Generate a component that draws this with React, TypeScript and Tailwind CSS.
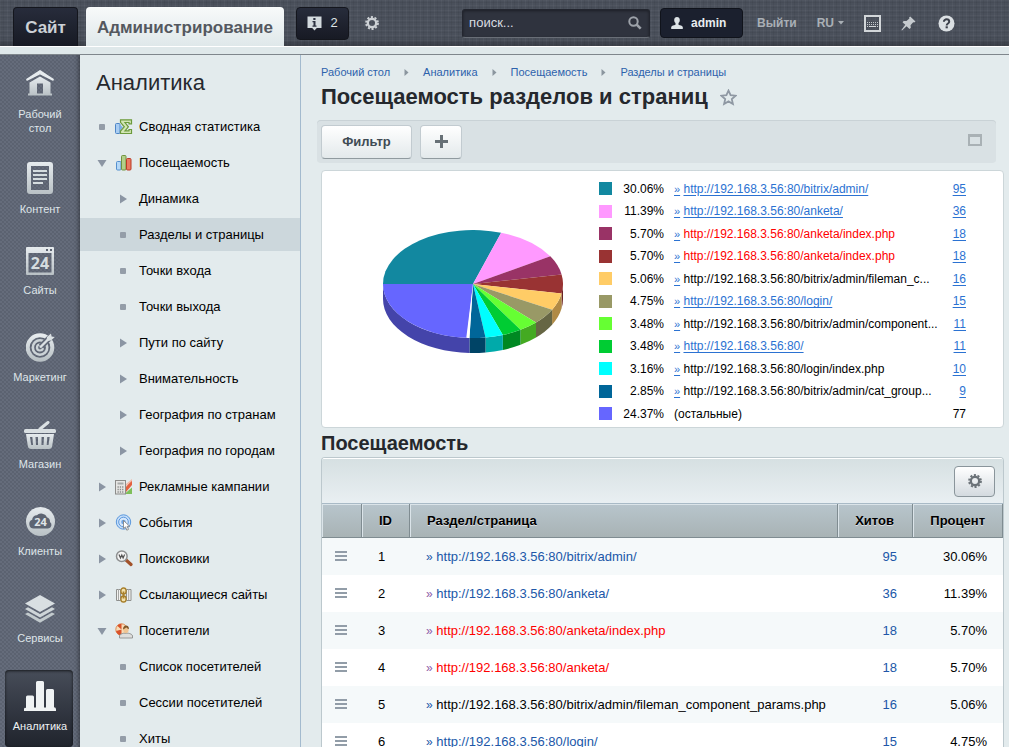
import React from "react";

type Kind = "dot" | "closed" | "open";

/* ---------- top bar icons ---------- */

const GearIcon = ({ color, size }: { color: string; size: number }) => (
  <svg width={size} height={size} viewBox="0 0 14 14" aria-hidden="true">
    <circle cx="7" cy="7" r="4.2" fill="none" stroke={color} strokeWidth="2.4" />
    <circle cx="7" cy="7" r="6" fill="none" stroke={color} strokeWidth="1.8" strokeDasharray="2.1 1.67" />
  </svg>
);

const InfoIcon = () => (
  <svg width="15" height="15" viewBox="0 0 15 15" aria-hidden="true">
    <path d="M0.5 0.5h14v11.500h-4.700L7.500 14.500 5.200 12H0.500z" fill="#d3dade" />
    <path d="M6.300 2h2.200v2H6.300zM5.500 5h3v4.500h1V10.700h-4V9.500h1V6.200h-1z" fill="#2c3140" />
  </svg>
);

const SearchIcon = () => (
  <svg width="14" height="14" viewBox="0 0 14 14" aria-hidden="true">
    <circle cx="5.500" cy="5.500" r="4.200" fill="none" stroke="#9da2a9" strokeWidth="2" />
    <path d="M8.700 8.700L12.700 12.700" stroke="#9da2a9" strokeWidth="2.600" />
  </svg>
);

const UserIcon = () => (
  <svg width="12" height="12" viewBox="0 0 12 12" aria-hidden="true">
    <path d="M6 0c1.700 0 2.800 1.200 2.800 2.900 0 1.500-.6 2.500-1.300 3.200v1.700c1.700.5 4 1 4.300 2.200V12H.2v-2c.3-1.200 2.600-1.700 4.300-2.200V6.100C3.800 5.400 3.200 4.400 3.200 2.900 3.200 1.200 4.300 0 6 0z" fill="#dde3e6" />
  </svg>
);

const KeyboardIcon = () => (
  <svg width="17" height="17" viewBox="0 0 17 17" aria-hidden="true">
    <rect x="1" y="1" width="15" height="15" fill="none" stroke="#d2d6d9" strokeWidth="2" />
    <path d="M3 7.500h11M3 9.500h11" stroke="#c3c8cc" strokeDasharray="1 1" />
    <path d="M3 11.500h1M5 11.500h7M13 11.500h1" stroke="#d2d6d9" />
  </svg>
);

const PinIcon = () => (
  <svg width="15" height="15" viewBox="0 0 15 15" aria-hidden="true">
    <path d="M9.200 0.500l5.300 5-1.300 1-1-.3-2.700 3 .3 2.600-1.300 1.200-2.900-2.800L1 14.600l-.6-.5 3.900-5.300L1.500 6.200l1.200-1.300 2.800.2 2.900-2.700-.3-.9z" fill="#c5cace" />
  </svg>
);

const HelpIcon = () => (
  <svg width="17" height="17" viewBox="0 0 17 17" aria-hidden="true">
    <circle cx="8.500" cy="8.500" r="8" fill="#dbe0e3" />
    <path d="M5.900 6.700c0-3.200 5.300-3.100 5.300 0 0 1.800-2.500 1.700-2.500 3.700" fill="none" stroke="#3c414b" strokeWidth="2" />
    <rect x="7.600" y="11.300" width="2.200" height="2" fill="#3c414b" />
  </svg>
);

/* ---------- rail icons ---------- */

const g = "url(#railGradient)";

const HomeIcon = () => (
  <svg width="28" height="29" viewBox="0 0 28 29" aria-hidden="true">
    <path d="M14 0.800L27 9.300V10L14 3.600 1 10V9.300z" fill="#e6ebee" stroke="#e6ebee" strokeWidth="1.600" strokeLinejoin="round" />
    <path fillRule="evenodd" d="M14 6.600L24.500 12.600V23.500H26V25.500H2V23.500H3.500V12.600zM11 13.500v10h6v-10z" fill={g} />
  </svg>
);
const ContentIcon = () => (
  <svg width="26" height="32" viewBox="0 0 26 32" aria-hidden="true">
    <path fillRule="evenodd" d="M3 0h20a3 3 0 0 1 3 3v26a3 3 0 0 1-3 3H3a3 3 0 0 1-3-3V3a3 3 0 0 1 3-3zM4 4v24h18V4z" fill={g} />
    <path d="M6 8h14v2H6zM6 12h14v2H6zM6 16h14v2H6zM6 20h10v2H6z" fill="#d5dcdf" />
  </svg>
);
const SitesIcon = () => (
  <svg width="28" height="28" viewBox="0 0 28 28" aria-hidden="true">
    <path fillRule="evenodd" d="M1 0h26a1 1 0 0 1 1 1v26a1 1 0 0 1-1 1H1a1 1 0 0 1-1-1V1a1 1 0 0 1 1-1zM2.500 6v19.500h23V6zM20 2v2h2V2zM24 2v2h2V2z" fill={g} />
    <text x="14" y="22" textAnchor="middle" fontFamily="Open Sans, sans-serif" fontWeight="700" fontSize="16" fill="#d5dcdf">24</text>
  </svg>
);
const TargetIcon = () => (
  <svg width="29" height="29" viewBox="0 0 29 29" aria-hidden="true">
    <circle cx="14" cy="14.500" r="12.300" fill="none" stroke={g} strokeWidth="4" />
    <circle cx="14" cy="14.500" r="7.200" fill="none" stroke="#ccd3d7" strokeWidth="2.600" />
    <circle cx="14" cy="14.500" r="3" fill="none" stroke="#ccd3d7" strokeWidth="2.200" />
    <path d="M15 13.500L25 3.500" stroke="#626978" strokeWidth="6" />
    <path d="M14 14.500L24 4.500" stroke="#dbe1e4" strokeWidth="2.400" />
    <path d="M20.500 8l0.500-4L25 0.500l0.600 2.900 3.200 0.600L25 7.500z" fill="#dbe1e4" />
  </svg>
);
const BasketIcon = () => (
  <svg width="32" height="28" viewBox="0 0 32 28" aria-hidden="true">
    <path d="M16 8L24 1.500" stroke="#dbe1e4" strokeWidth="3" strokeLinecap="round" />
    <rect x="0" y="8" width="32" height="4" rx="1.500" fill="#d9dfe2" />
    <path fillRule="evenodd" d="M2 13h28l-1.800 12a3.500 3.500 0 0 1-3.400 3H7.200a3.500 3.500 0 0 1-3.400-3zM6 16l1.200 8H9l-.6-8zM11.500 16l.5 8h2v-8zM17.500 16v8h2l.5-8zM23.300 16l-.6 8h1.800l1.200-8z" fill={g} />
  </svg>
);
const CloudIcon = () => (
  <svg width="29" height="29" viewBox="0 0 29 29" aria-hidden="true">
    <circle cx="14.500" cy="14.500" r="14.500" fill={g} />
    <path d="M8 21.500a4.500 4.500 0 0 1-1.800-8.700 4.500 4.500 0 0 1 4.800-4.500 6 6 0 0 1 9.800 1.900 4.800 4.800 0 0 1 3.200 4.800 3.600 3.600 0 0 1-2 6.500z" fill="#5d6472" />
    <text x="14.500" y="18.800" textAnchor="middle" fontFamily="Open Sans, sans-serif" fontWeight="700" fontSize="11" fill="#e0e5e8">24</text>
  </svg>
);
const LayersIcon = () => (
  <svg width="32" height="28" viewBox="0 0 32 28" aria-hidden="true">
    <path d="M16 0l15 8.500L16 17 1 8.500z" fill="#d9dfe2" />
    <path d="M4 12.200L16 19l12-6.800 3 1.700L16 22.500 1 13.900z" fill="#ced5d8" />
    <path d="M4 17.400l12 6.800 12-6.800 3 1.700L16 27.700 1 19.100z" fill="#c2cacd" />
  </svg>
);
const BarsIcon = () => (
  <svg width="32" height="30" viewBox="0 0 32 30" aria-hidden="true">
    <path d="M2 27V16a1.500 1.500 0 0 1 1.500-1.500h5A1.500 1.500 0 0 1 10 16v10.500h2V1.500A1.500 1.500 0 0 1 13.500 0h5A1.500 1.500 0 0 1 20 1.500v25h2V9.500A1.500 1.500 0 0 1 23.500 8h5A1.500 1.500 0 0 1 30 9.500V26.300a2 2 0 0 1 2 2V30H0v-1.700A1.500 1.500 0 0 1 2 27z" fill="#f0f3f4" />
  </svg>
);

/* ---------- menu icons ---------- */

const SumIcon = () => (
  <svg width="18" height="16" viewBox="0 0 18 16" aria-hidden="true">
    <rect x="0.500" y="4.500" width="4.500" height="10" rx="1" fill="#a9cdf2" stroke="#4f86c6" />
    <path d="M4.500 5l3.500 3.500-3.500 3.500z" fill="#7fb0e6" />
    <path d="M5.500 0.800h11v4h-2.500v-1.300h-4l3.400 4.300-3.400 4h4v-1.300h2.500v4h-11v-2.500l3.800-4.200-3.800-4.500z" fill="#d3e6b5" stroke="#6c9a3c" strokeWidth="1.200" />
  </svg>
);
const ChartIcon = () => (
  <svg width="18" height="16" viewBox="0 0 18 16" aria-hidden="true">
    <rect x="1.500" y="6.500" width="4.500" height="8.500" rx="1" fill="#b5d8f7" stroke="#5590cf" />
    <rect x="6.500" y="0.500" width="4.500" height="14.500" rx="1" fill="#b3cf8a" stroke="#70933f" />
    <rect x="11.500" y="3.500" width="4.500" height="11.500" rx="1" fill="#ea7a62" stroke="#bb3a25" />
  </svg>
);
const CampaignIcon = () => (
  <svg width="18" height="16" viewBox="0 0 18 16" aria-hidden="true">
    <path d="M10 9l7-8v5l-6 7z" fill="#e3613f" />
    <path d="M11 5l6-5v2l-6 5z" fill="#f3b9a6" />
    <path d="M10 14.500l7-6v6.500h-7z" fill="#7fbf5a" />
    <rect x="0.500" y="1.500" width="10" height="13.500" fill="#e6e6e4" stroke="#8c8c8a" />
    <rect x="2.500" y="3.500" width="6" height="2" fill="#a7aaa9" />
    <path d="M2.500 8h6M2.500 10.500h6M2.500 13h6" stroke="#8a8c8b" strokeWidth="1.300" strokeDasharray="1.300 1" />
  </svg>
);
const EventsIcon = () => (
  <svg width="18" height="17" viewBox="0 0 18 17" aria-hidden="true">
    <circle cx="8.500" cy="8" r="7.200" fill="#c4defa" stroke="#5b97dc" />
    <circle cx="8.500" cy="8" r="4.800" fill="#d6e8fb" stroke="#5b97dc" />
    <circle cx="8.500" cy="8" r="2.300" fill="#6ea5e4" />
    <path d="M8.500 6.500v8l2-1.600 1.300 3.300 1.700-.8-1.400-3.100h2.600z" fill="#fff" stroke="#7a7a7a" strokeWidth="0.800" />
  </svg>
);
const SearchersIcon = () => (
  <svg width="18" height="17" viewBox="0 0 18 17" aria-hidden="true">
    <path d="M10.500 9.500l5.500 5" stroke="#a2522a" strokeWidth="3.200" strokeLinecap="round" />
    <circle cx="6.800" cy="6.300" r="5.300" fill="#f4f4f4" stroke="#8d8f90" strokeWidth="1.500" />
    <path d="M4 4.500l1.500 3.500L6.800 5l1.300 3 1.500-3.500" fill="none" stroke="#555" strokeWidth="1.200" />
  </svg>
);
const ReferrersIcon = () => (
  <svg width="18" height="16" viewBox="0 0 18 16" aria-hidden="true">
    <path d="M1.500 2.500h4v11h-4zM11.500 2.500h4.500v11h-4.500z" fill="#f2f2f0" stroke="#8f908e" />
    <path d="M3.500 2v11M13.700 2v11" stroke="#a6a7a5" />
    <rect x="6" y="1" width="5" height="6" rx="2.300" fill="#f3e2ae" stroke="#a9802b" strokeWidth="1.300" />
    <rect x="6" y="9" width="5" height="6" rx="2.300" fill="#f3e2ae" stroke="#a9802b" strokeWidth="1.300" />
    <path d="M8.500 4.500v7" stroke="#a9802b" strokeWidth="1.800" />
  </svg>
);
const VisitorsIcon = () => (
  <svg width="18" height="16" viewBox="0 0 18 16" aria-hidden="true">
    <circle cx="6.500" cy="6.500" r="5.700" fill="#f7dcb8" stroke="#df8b52" />
    <path d="M6.500 6.500L2.200 2.800A5.700 5.700 0 0 1 6.500 0.800zM6.500 6.500v5.700A5.700 5.700 0 0 1 1 8z" fill="#d9532b" />
    <path d="M4.500 15v-2c0-1.500 2-2.300 4.300-2.800h4.400c2.300.5 4.300 1.300 4.300 2.800v2z" fill="#dededc" stroke="#8f908e" strokeWidth="0.900" />
    <ellipse cx="11" cy="6.500" rx="2.700" ry="3.600" fill="#efc493" />
    <path d="M8 6.500C7.800 1.500 14 1.300 14 6c-1.500-.2-2.300-1-2.800-1.700C10.500 5.200 9.300 5.800 8 6.500z" fill="#80572a" />
  </svg>
);

const Marker = ({ kind }: { kind: Kind }) => (
  <svg width="10" height="10" viewBox="0 0 10 10" aria-hidden="true">
    {kind === "dot" && <rect x="2" y="2" width="6" height="6" rx="1" fill="#949da8" />}
    {kind === "closed" && <path d="M2 0.500L9 5 2 9.500z" fill="#8b95a3" />}
    {kind === "open" && <path d="M0.500 2h9L5 9z" fill="#8b95a3" />}
  </svg>
);

/* ---------- data ---------- */

const rail = [
  { label: "Рабочий стол", Icon: HomeIcon, box: "h-[94px]" },
  { label: "Контент", Icon: ContentIcon, box: "h-[81px]" },
  { label: "Сайты", Icon: SitesIcon, box: "h-[81px]" },
  { label: "Маркетинг", Icon: TargetIcon, box: "h-[87px]" },
  { label: "Магазин", Icon: BasketIcon, box: "h-[87px]" },
  { label: "Клиенты", Icon: CloudIcon, box: "h-[87px]" },
  { label: "Сервисы", Icon: LayersIcon, box: "h-[87px]" },
  { label: "Аналитика", Icon: BarsIcon, box: "h-[88px]", active: true },
];

const menu: { label: string; kind: Kind; Icon?: () => React.JSX.Element; active?: boolean }[] = [
  { label: "Сводная статистика", kind: "dot", Icon: SumIcon },
  { label: "Посещаемость", kind: "open", Icon: ChartIcon },
  { label: "Динамика", kind: "closed" },
  { label: "Разделы и страницы", kind: "dot", active: true },
  { label: "Точки входа", kind: "dot" },
  { label: "Точки выхода", kind: "dot" },
  { label: "Пути по сайту", kind: "closed" },
  { label: "Внимательность", kind: "closed" },
  { label: "География по странам", kind: "closed" },
  { label: "География по городам", kind: "closed" },
  { label: "Рекламные кампании", kind: "closed", Icon: CampaignIcon },
  { label: "События", kind: "closed", Icon: EventsIcon },
  { label: "Поисковики", kind: "closed", Icon: SearchersIcon },
  { label: "Ссылающиеся сайты", kind: "closed", Icon: ReferrersIcon },
  { label: "Посетители", kind: "open", Icon: VisitorsIcon },
  { label: "Список посетителей", kind: "dot" },
  { label: "Сессии посетителей", kind: "dot" },
  { label: "Хиты", kind: "dot" },
];

const host = "http://192.168.3.56:80/";
const linkCls = "text-[#2b72d2] underline underline-offset-2";
const legend = [
  { color: "#1288a0", side: "#0c5f70", value: 30.06, url: host + "bitrix/admin/", tone: linkCls, hits: 95 },
  { color: "#ff99ff", side: "#b36bb3", value: 11.39, url: host + "anketa/", tone: linkCls, hits: 36 },
  { color: "#993366", side: "#6b2447", value: 5.7, url: host + "anketa/index.php", tone: "text-[#ff0000]", hits: 18 },
  { color: "#993333", side: "#6b2424", value: 5.7, url: host + "anketa/index.php", tone: "text-[#ff0000]", hits: 18 },
  { color: "#ffcc66", side: "#b08a45", value: 5.06, url: host + "bitrix/admin/fileman_c...", tone: "text-black", hits: 16 },
  { color: "#999966", side: "#666644", value: 4.75, url: host + "login/", tone: linkCls, hits: 15 },
  { color: "#66ff33", side: "#44aa22", value: 3.48, url: host + "bitrix/admin/component...", tone: "text-black", hits: 11 },
  { color: "#00cc33", side: "#008822", value: 3.48, url: host, tone: linkCls, hits: 11 },
  { color: "#00ffff", side: "#00aaaa", value: 3.16, url: host + "login/index.php", tone: "text-black", hits: 10 },
  { color: "#006699", side: "#004466", value: 2.85, url: host + "bitrix/admin/cat_group...", tone: "text-black", hits: 9 },
  { color: "#6666ff", side: "#4444aa", value: 24.37, url: "", tone: "text-black", hits: 77 },
];

const rows = [
  { url: host + "bitrix/admin/", tone: "text-[#2057a8]", mark: "text-[#2057a8]", hits: 95, pct: "30.06%" },
  { url: host + "anketa/", tone: "text-[#2057a8]", mark: "text-[#8c5ba8]", hits: 36, pct: "11.39%" },
  { url: host + "anketa/index.php", tone: "text-[#ff0000]", mark: "text-[#8c5ba8]", hits: 18, pct: "5.70%" },
  { url: host + "anketa/", tone: "text-[#ff0000]", mark: "text-[#8c5ba8]", hits: 18, pct: "5.70%" },
  { url: host + "bitrix/admin/fileman_component_params.php", tone: "text-black", mark: "text-[#2057a8]", hits: 16, pct: "5.06%" },
  { url: host + "login/", tone: "text-[#2057a8]", mark: "text-[#2057a8]", hits: 15, pct: "4.75%" },
];

/* ---------- chart ---------- */

function Pie() {
  const cx = 90, cy = 54, rx = 90, ry = 54, depth = 15;
  const at = (a: number) => {
    const r = (a * Math.PI) / 180;
    return [cx - rx * Math.cos(r), cy - ry * Math.sin(r)];
  };
  let angle = 0;
  const slices = legend.map((s, i) => {
    const start = angle;
    angle += s.value * 3.6;
    const end = Math.min(angle, 360);
    const last = i === legend.length - 1;
    const [x1, y1] = at(last ? start + 2 : start);
    const [x2, y2] = at(end);
    const top = `M${cx} ${cy}L${x1} ${y1}A${rx} ${ry} 0 0 1 ${x2} ${y2}Z`;
    let wall = "";
    if (end > 180) {
      const [sx, sy] = at(Math.max(start, 180));
      wall = `M${sx} ${sy}A${rx} ${ry} 0 0 1 ${x2} ${y2}V${y2 + depth}A${rx} ${ry} 0 0 0 ${sx} ${sy + depth}Z`;
    }
    return { ...s, top, wall };
  });
  return (
    <svg width="180" height="124" viewBox="0 0 180 124" role="img" aria-label="Посещаемость">
      {slices.map((s, i) => s.wall && <path key={i} d={s.wall} fill={s.side} />)}
      {slices.map((s, i) => (
        <path key={i} d={s.top} fill={s.color} />
      ))}
      <path d="M90 54L84 107.800L86.400 108z" fill="#fff" />
    </svg>
  );
}

/* ---------- layout ---------- */

function TopBar() {
  return (
    <header className="flex-none">
      <div className="flex h-[46px] items-end bg-[#4a505b] bg-[repeating-linear-gradient(90deg,rgba(255,255,255,0.035)_0px,rgba(255,255,255,0.035)_1px,transparent_1px,transparent_3px,rgba(0,0,0,0.05)_3px,rgba(0,0,0,0.05)_4px,transparent_4px,transparent_7px),repeating-linear-gradient(0deg,rgba(255,255,255,0.03)_0px,rgba(255,255,255,0.03)_1px,transparent_1px,transparent_3px,rgba(0,0,0,0.05)_3px,rgba(0,0,0,0.05)_4px,transparent_4px,transparent_5px)] pl-[13px] shadow-[inset_0_-6px_6px_-4px_rgba(0,0,0,0.35)]">
        <a href="#site" className="flex h-[39px] w-[65px] items-center justify-center rounded-t border border-b-0 border-[#14161d] bg-linear-to-b from-[#272c3b] to-[#171a24] pt-[2px] text-[17px] font-bold text-[#ccd1d6]">
          Сайт
        </a>
        <a href="#admin" className="ml-2 flex h-[39px] w-[198px] items-center justify-center rounded-t bg-linear-to-b from-[#f8fafa] to-[#dfe8ea] pt-[2px] text-[17px] font-bold text-[#54585f]">
          Администрирование
        </a>
        <div className="flex h-full flex-1 items-center">
          <button type="button" className="ml-3 flex h-[33px] w-[53px] items-center justify-center gap-2 rounded border border-[#14161d] bg-linear-to-b from-[#272c3b] to-[#171a24] text-[13px] text-[#dfe3e6]">
            <InfoIcon />2
          </button>
          <button type="button" aria-label="Настройки" className="ml-4">
            <GearIcon color="#cdd1d5" size={14} />
          </button>
          <label className="ml-auto flex h-[29px] w-[188px] items-center rounded-[3px] border border-[#23262f] border-b-[#696e77] bg-[#2f333e] pr-[7px] pl-[6px] shadow-[inset_0_1px_3px_rgba(0,0,0,0.4)]">
            <input type="text" aria-label="Поиск" placeholder="поиск..." className="w-0 flex-1 bg-transparent text-[13px] text-white outline-none placeholder:text-[#d9dde2]" />
            <SearchIcon />
          </label>
          <button type="button" className="ml-[10px] flex h-[30px] w-[83px] items-center gap-2 rounded border border-[#10131b] bg-[#1b202e] pl-[10px] text-[12px] font-bold text-[#e8ecef]">
            <UserIcon />
            admin
          </button>
          <a href="#logout" className="ml-[14px] text-[12px] font-bold text-[#a9afb5]">Выйти</a>
          <button type="button" className="ml-5 flex items-center gap-1 text-[12px] font-bold text-[#a9afb5]">
            RU
            <svg width="6" height="4" viewBox="0 0 6 4" aria-hidden="true"><path d="M0 0h6L3 3.500z" fill="#a9afb5" /></svg>
          </button>
          <button type="button" aria-label="Горячие клавиши" className="ml-5"><KeyboardIcon /></button>
          <button type="button" aria-label="Закрепить панель" className="ml-5"><PinIcon /></button>
          <button type="button" aria-label="Справка" className="mr-[54px] ml-[22px]"><HelpIcon /></button>
        </div>
      </div>
      <div className="h-[9px] border-t border-b border-t-white border-b-[#7f868c] bg-[#dfe8ea]" />
    </header>
  );
}

function Rail() {
  return (
    <nav className="w-[80px] flex-none overflow-hidden bg-[#656c7b] bg-[radial-gradient(circle_at_1px_1px,rgba(40,46,60,0.16)_0.8px,transparent_1px),radial-gradient(circle_at_3px_3px,rgba(40,46,60,0.16)_0.8px,transparent_1px)] bg-size-[4px_4px] shadow-[inset_-5px_0_5px_-4px_rgba(0,0,0,0.45)]">
      <svg width="0" height="0" className="absolute" aria-hidden="true">
        <linearGradient id="railGradient" x1="0" y1="0" x2="0" y2="1">
          <stop offset="0" stopColor="#e6ebee" />
          <stop offset="1" stopColor="#b9c1c5" />
        </linearGradient>
      </svg>
      {rail.map(({ label, Icon, box, active }) => (
        <div key={label} className={`flex items-end pr-[7px] pl-[5px] ${box}`}>
          <a
            href="#section"
            className={
              active
                ? "flex h-[77px] flex-1 flex-col items-center justify-end gap-2 rounded bg-linear-to-b from-[#474d59] to-[#20242d] pb-[14px] pl-[2px] text-center text-[11px] leading-[14px] text-[#edf1f3] shadow-[inset_0_1px_3px_rgba(0,0,0,0.7)]"
                : "flex flex-1 flex-col items-center justify-end gap-2 pb-[14px] pl-[2px] text-center text-[11px] leading-[14px] text-[#dfe5e9]"
            }
          >
            <Icon />
            <span className="w-[62px]">{label}</span>
          </a>
        </div>
      ))}
    </nav>
  );
}

function SideMenu() {
  return (
    <nav className="w-[221px] flex-none overflow-y-auto border-r border-[#a3bace] pt-[14px] [scrollbar-width:none]">
      <h2 className="mb-[13px] pl-4 text-[22px] leading-7 text-[#25282d]">Аналитика</h2>
      <ul className="flex flex-col gap-[3px]">
        {menu.map(({ label, kind, Icon, active }) => (
          <li key={label} className={active ? "bg-[#ccd7dc]" : ""}>
            <a href="#item" className="flex h-[33px] items-center pr-2 pl-[17px] text-[13px] text-black">
              <span className={Icon ? "mr-2 flex w-[10px]" : "mr-[11px] ml-[21px] flex w-[10px]"}>
                <Marker kind={kind} />
              </span>
              {Icon && <span className="mr-[6px] flex w-[18px]"><Icon /></span>}
              {label}
            </a>
          </li>
        ))}
      </ul>
    </nav>
  );
}

const crumbs = ["Рабочий стол", "Аналитика", "Посещаемость", "Разделы и страницы"];

function Legend() {
  return (
    <table className="text-[12px] text-black">
      <tbody>
        {legend.map((r, i) => (
          <tr key={i} className="h-[23px] even:h-[22px]">
            <td className="w-[13px] p-0">
              <span className="block size-[13px]" style={{ backgroundColor: r.color }} />
            </td>
            <td className="w-[52px] p-0 text-right">{r.value.toFixed(2)}%</td>
            <td className="w-[275px] p-0 pl-[10px] whitespace-nowrap">
              {r.url ? (
                <>
                  <a href="#open" className="text-[11px] text-[#2b72d2] underline underline-offset-2">»</a>{" "}
                  <a href="#page" className={r.tone}>{r.url}</a>
                </>
              ) : (
                "(остальные)"
              )}
            </td>
            <td className="w-[27px] p-0 text-right">
              {r.url ? <a href="#hits" className={linkCls}>{r.hits}</a> : r.hits}
            </td>
          </tr>
        ))}
      </tbody>
    </table>
  );
}

const headCell =
  "border-r border-[#7f8c91] bg-linear-to-b from-[#b8c5cc] to-[#a8b3b5] shadow-[inset_1px_1px_0_#dbe4e9] [text-shadow:0_1px_0_rgba(255,255,255,0.6)]";

function Grid() {
  return (
    <section className="overflow-hidden rounded-t border border-b-0 border-[#bcc8cd] bg-white">
      <div className="flex h-[46px] items-center justify-end border-t border-b border-t-white border-b-[#a9bac6] bg-linear-to-b from-[#d6e0e2] to-[#e9eff2] pr-2">
        <button type="button" aria-label="Настройки таблицы" className="flex h-[31px] w-[41px] items-center justify-center rounded border border-[#8a959b] bg-linear-to-b from-white to-[#d3dadf]">
          <GearIcon color="#6b7278" size={14} />
        </button>
      </div>
      <table className="w-full table-fixed border-separate border-spacing-0 text-[13px] text-black">
        <colgroup>
          <col className="w-[40px]" />
          <col className="w-[48px]" />
          <col />
          <col className="w-[75px]" />
          <col className="w-[90px]" />
        </colgroup>
        <thead>
          <tr className="h-[34px]">
            <th className={`border-b ${headCell}`} />
            <th className={`border-b p-0 pl-[17px] text-left ${headCell}`}>ID</th>
            <th className={`border-b p-0 pl-[17px] text-left ${headCell}`}>Раздел/страница</th>
            <th className={`border-b p-0 pr-[18px] text-right ${headCell}`}>Хитов</th>
            <th className={`border-b p-0 pr-[17px] text-right ${headCell}`}>Процент</th>
          </tr>
        </thead>
        <tbody>
          {rows.map((r, i) => (
            <tr key={i} className="h-[37px] bg-white odd:bg-[#f5f9fa]">
              <td className="p-0 pb-[2px] pl-[13px]">
                <button type="button" aria-label="Действия" className="flex flex-col gap-[2px] py-1">
                  <span className="h-[2px] w-3 bg-[#929da8]" />
                  <span className="h-[2px] w-3 bg-[#929da8]" />
                  <span className="h-[2px] w-3 bg-[#929da8]" />
                </button>
              </td>
              <td className="p-0 pl-4">{i + 1}</td>
              <td className="p-0 pl-4 whitespace-nowrap">
                <a href="#open" className={`text-[12px] ${r.mark}`}>»</a>{" "}
                <a href="#page" className={r.tone}>{r.url}</a>
              </td>
              <td className="p-0 pr-4 text-right"><a href="#hits" className="text-[#2057a8]">{r.hits}</a></td>
              <td className="p-0 pr-4 text-right">{r.pct}</td>
            </tr>
          ))}
        </tbody>
      </table>
    </section>
  );
}

function Content() {
  return (
    <main className="min-w-0 flex-1 overflow-y-auto pr-[5px] pl-[20px] [scrollbar-width:none]">
      <div className="flex items-center pt-[10px] text-[11px] leading-[14px] text-[#2d62ac]">
        {crumbs.map((c, i) => (
          <React.Fragment key={c}>
            {i > 0 && (
              <svg width="5" height="7" viewBox="0 0 5 7" className="mx-[14px]" aria-hidden="true">
                <path d="M0.500 0L4.500 3.500 0.500 7z" fill="#8b969f" />
              </svg>
            )}
            <a href="#crumb">{c}</a>
          </React.Fragment>
        ))}
      </div>
      <div className="mt-1 flex items-center gap-3">
        <h1 className="text-[22px] leading-7 font-bold text-[#25282d]">Посещаемость разделов и страниц</h1>
        <button type="button" aria-label="Добавить в избранное">
          <svg width="17" height="17" viewBox="0 0 17 17" aria-hidden="true">
            <path d="M8.500 1.600l2.100 4.600 5 .5-3.800 3.400 1.100 4.900-4.400-2.600-4.400 2.600 1.100-4.900L1.400 6.700l5-.5z" fill="none" stroke="#8f98a3" strokeWidth="1.800" />
          </svg>
        </button>
      </div>
      <div className="mt-[9px] mr-2 -ml-1 flex h-[43px] items-center gap-2 rounded bg-[#d9e1e4] px-1 shadow-[inset_0_1px_0_#c9d2d6]">
        <button type="button" className="h-[34px] w-[91px] rounded border border-[#c2cbd0] border-b-[#909a9f] bg-linear-to-b from-white to-[#e3e9eb] text-[13px] font-bold text-[#3f4b54]">
          Фильтр
        </button>
        <button type="button" aria-label="Добавить фильтр" className="flex h-[34px] w-[42px] items-center justify-center rounded border border-[#c2cbd0] border-b-[#909a9f] bg-linear-to-b from-white to-[#e3e9eb]">
          <svg width="13" height="13" viewBox="0 0 13 13" aria-hidden="true">
            <path d="M5 0h3v5h5v3H8v5H5V8H0V5h5z" fill="#677076" />
          </svg>
        </button>
        <button type="button" aria-label="Свернуть фильтр" className="mr-[10px] mb-1 ml-auto h-3 w-[14px] border-2 border-t-[3px] border-[#a9b1b5]" />
      </div>
      <section className="mt-[7px] flex h-[258px] items-start rounded border border-[#ccd6d9] bg-white">
        <div className="flex flex-1 justify-center pt-[59px] pl-[25px]"><Pie /></div>
        <div className="flex-none pt-[6px] pr-[37px]"><Legend /></div>
      </section>
      <h2 className="mt-px text-[20px] leading-7 font-bold text-[#25282d]">Посещаемость</h2>
      <Grid />
    </main>
  );
}

export default function App() {
  return (
    <div className="flex h-screen flex-col overflow-hidden bg-[#e3ebed] font-['Liberation_Sans',Arial,sans-serif]">
      <TopBar />
      <div className="flex min-h-0 flex-1">
        <Rail />
        <SideMenu />
        <Content />
      </div>
    </div>
  );
}
